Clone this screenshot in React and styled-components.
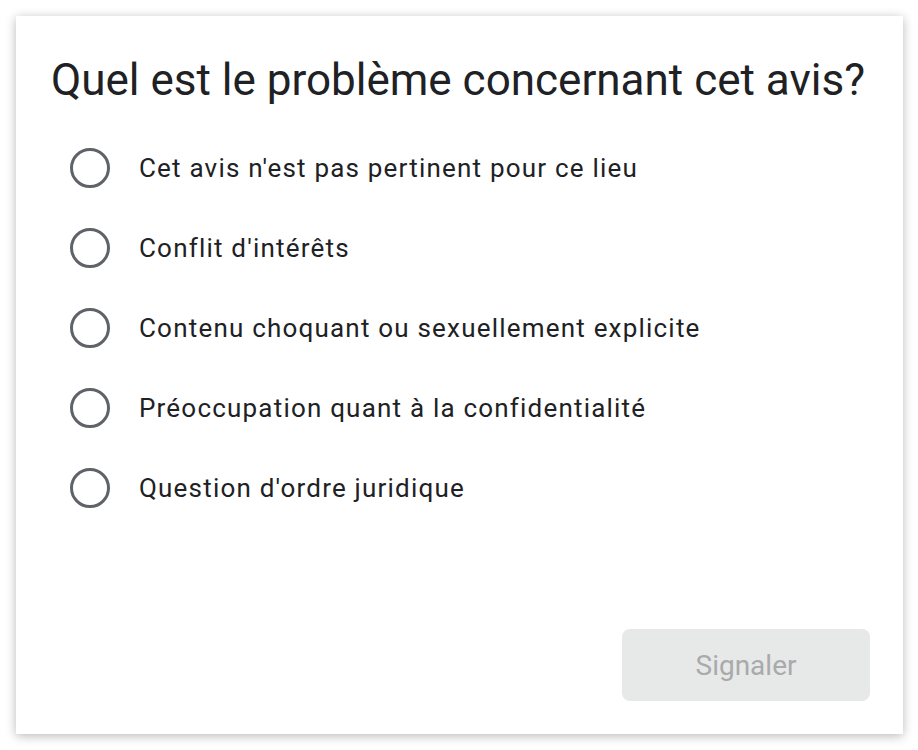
import React, { useState } from 'react'
import styled, { createGlobalStyle } from 'styled-components'

const options = [
  "Cet avis n'est pas pertinent pour ce lieu",
  "Conflit d'intérêts",
  'Contenu choquant ou sexuellement explicite',
  'Préoccupation quant à la confidentialité',
  "Question d'ordre juridique",
]

function App() {
  const [selected, setSelected] = useState(null)

  return (
    <>
      <GlobalStyle />
      <Page>
        <Card>
          <Title>Quel est le problème concernant cet avis?</Title>
          <OptionList>
            {options.map((label, index) => (
              <Option key={index} onClick={() => setSelected(index)}>
                <Radio checked={selected === index} />
                <Label>{label}</Label>
              </Option>
            ))}
          </OptionList>
          <Footer>
            <SubmitButton disabled={selected === null}>Signaler</SubmitButton>
          </Footer>
        </Card>
      </Page>
    </>
  )
}

export default App

const GlobalStyle = createGlobalStyle`
  html, body {
    margin: 0;
    padding: 0;
    background: #fff;
  }
  body {
    font-family: Roboto, "Liberation Sans", Arial, sans-serif;
    color: #202124;
  }
`

const Page = styled.div`
  padding: 16px 15px 16px 16px;
  height: 750px;
  box-sizing: border-box;
`

const Card = styled.div`
  height: 100%;
  box-sizing: border-box;
  background: #fff;
  box-shadow: 0 2px 10px rgba(0, 0, 0, 0.28);
  padding: 38px 33px 33px 35px;
  display: flex;
  flex-direction: column;
`

const Title = styled.h1`
  margin: 0;
  font-size: 44px;
  font-weight: 400;
  line-height: 52px;
  color: #202124;
  white-space: nowrap;
`

const OptionList = styled.div`
  display: flex;
  flex-direction: column;
  margin-top: 22px;
  padding-left: 19px;
`

const Option = styled.label`
  display: flex;
  align-items: center;
  height: 80px;
  cursor: pointer;
`

const Radio = styled.span`
  width: 40px;
  height: 40px;
  box-sizing: border-box;
  border-radius: 50%;
  border: 3px solid ${(props) => (props.checked ? '#1a73e8' : '#5f6368')};
  box-shadow: inset 0 0 0 6px #fff;
  background: ${(props) => (props.checked ? '#1a73e8' : '#fff')};
  flex-shrink: 0;
`

const Label = styled.span`
  margin-left: 29px;
  font-size: 26px;
  letter-spacing: 1.2px;
  color: #202124;
`

const Footer = styled.div`
  margin-top: auto;
  display: flex;
  justify-content: flex-end;
`

const SubmitButton = styled.button`
  width: 248px;
  height: 72px;
  border: none;
  border-radius: 8px;
  background: ${(props) => (props.disabled ? '#e7e8e8' : '#1a73e8')};
  color: ${(props) => (props.disabled ? '#a9aaab' : '#fff')};
  font-family: Roboto, "Liberation Sans", Arial, sans-serif;
  font-size: 28px;
  cursor: pointer;
`
